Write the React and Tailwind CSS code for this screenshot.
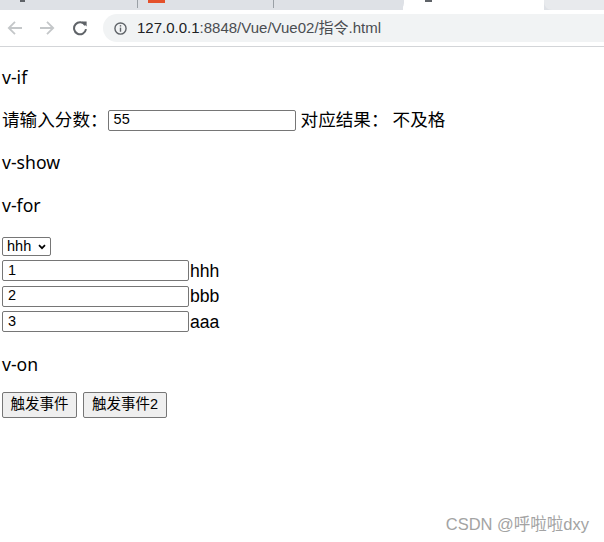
import React from "react";

const FONT = { fontFamily: '"Liberation Sans", "Noto Sans CJK SC", sans-serif' };
const HEAD = { fontFamily: '"Noto Sans", "Noto Sans CJK SC", sans-serif' };

function BrowserChrome() {
  return (
    <div className="flex flex-col">
      {/* tab strip */}
      <div className="relative h-[10px] bg-[#dee1e6] overflow-hidden">
        <div className="absolute left-[20px] top-0 w-[5px] h-[2px] bg-[#5f6368]" />
        <div className="absolute left-[137px] top-0 w-[1px] h-[8px] bg-[#9aa0a6]" />
        <div className="absolute left-[148px] top-0 w-[17px] h-[3px] bg-[#e4512b]" />
        <div className="absolute left-[273px] top-0 w-[1px] h-[8px] bg-[#9aa0a6]" />
        <div className="absolute left-[403px] top-0 w-[141px] h-[10px] bg-white" />
        <div className="absolute left-[396px] top-0 w-[8px] h-[10px] bg-[#dee1e6] rounded-br-[7px]" />
        <div className="absolute left-[425px] top-0 w-[7px] h-[2px] bg-[#5f6368]" />
        <div className="absolute left-[544px] top-0 w-[70px] h-[10px] bg-[#e8eaed] rounded-bl-[8px]" />
      </div>
      {/* toolbar */}
      <div className="h-[36px] bg-white flex items-center">
        <svg width="16" height="16" viewBox="0 0 16 16" className="ml-[7px]">
          <path d="M15 8H2.5M8 1.8L1.8 8L8 14.2" fill="none" stroke="#c4c7c9" strokeWidth="1.8" />
        </svg>
        <svg width="16" height="16" viewBox="0 0 16 16" className="ml-[16px]">
          <path d="M1 8H13.5M8 1.8L14.2 8L8 14.2" fill="none" stroke="#c4c7c9" strokeWidth="1.8" />
        </svg>
        <svg width="16" height="16" viewBox="0 0 16 16" className="ml-[17px]">
          <path d="M13.2 5.2A6 6 0 1 0 14 9.2" fill="none" stroke="#5f6368" strokeWidth="2" />
          <path d="M9.6 1.6L14.6 1.6L14.6 6.6Z" fill="#5f6368" />
        </svg>
        <div className="ml-[15px] flex-1 h-[28px] bg-[#f1f3f4] rounded-l-[14px] flex items-center">
          <svg width="13" height="13" viewBox="0 0 14 14" className="ml-[11px]">
            <circle cx="7" cy="7" r="6" fill="none" stroke="#5f6368" strokeWidth="1.5" />
            <rect x="6.25" y="6" width="1.5" height="4.5" fill="#5f6368" />
            <rect x="6.25" y="3.4" width="1.5" height="1.5" fill="#5f6368" />
          </svg>
          <span className="ml-[10px] text-[15px] text-[#202124]" style={FONT}>
            127.0.0.1<span className="text-[#4a4d51]">:8848/Vue/Vue02/指令.html</span>
          </span>
        </div>
      </div>
      <div className="h-[1px] bg-[#d3d5d8]" />
    </div>
  );
}

function TextInput({ value, width }) {
  return (
    <span
      className={`inline-flex items-center h-[21px] ${width} border border-[#767676] rounded-[2px] pl-[5px] text-[14.5px] text-black bg-white`}
      style={FONT}
    >
      {value}
    </span>
  );
}

export default function App() {
  return (
    <div className="relative w-[604px] h-[542px] bg-white overflow-hidden text-black" style={FONT}>
      <BrowserChrome />
      <div className="pl-[2px] text-[17.6px] flex flex-col">
        <div className="mt-[18px] h-[25px] flex items-center" style={HEAD}>v-if</div>
        <div className="mt-[17.5px] h-[25px] flex items-center">
          <span>请输入分数：</span>
          <TextInput value="55" width="w-[188px]" />
          <span className="ml-[5px]">对应结果：</span>
          <span className="ml-[4px]">不及格</span>
        </div>
        <div className="mt-[17.5px] h-[25px] flex items-center" style={HEAD}>v-show</div>
        <div className="mt-[17.5px] h-[25px] flex items-center" style={HEAD}>v-for</div>
        <div className="mt-[17.5px] h-[23px] flex items-center">
          <span className="inline-flex items-center justify-between h-[19px] w-[49px] border border-[#767676] rounded-[2px] pl-[4px] pr-[4px] text-[14.5px]">
            hhh
            <svg width="8" height="6" viewBox="0 0 8 6">
              <path d="M1 1.2L4 4.2L7 1.2" fill="none" stroke="#000" strokeWidth="1.7" />
            </svg>
          </span>
        </div>
        {[
          ["1", "hhh"],
          ["2", "bbb"],
          ["3", "aaa"],
        ].map(([v, t]) => (
          <div key={v} className="h-[25.5px] flex items-center">
            <TextInput value={v} width="w-[187px]" />
            <span className="ml-[1px]">{t}</span>
          </div>
        ))}
        <div className="mt-[17.5px] h-[25px] flex items-center" style={HEAD}>v-on</div>
        <div className="mt-[15px] h-[26px] flex items-center gap-[6px]">
          <button className="h-[26px] w-[75px] border border-[#767676] rounded-[2px] bg-[#efefef] text-[14.5px]" style={FONT}>
            触发事件
          </button>
          <button className="h-[26px] w-[84px] border border-[#767676] rounded-[2px] bg-[#efefef] text-[14.5px]" style={FONT}>
            触发事件2
          </button>
        </div>
      </div>
      <div className="absolute right-[15px] top-[512px] text-[16.5px] text-[#a3a3a3]" style={FONT}>
        CSDN @呼啦啦dxy
      </div>
    </div>
  );
}
